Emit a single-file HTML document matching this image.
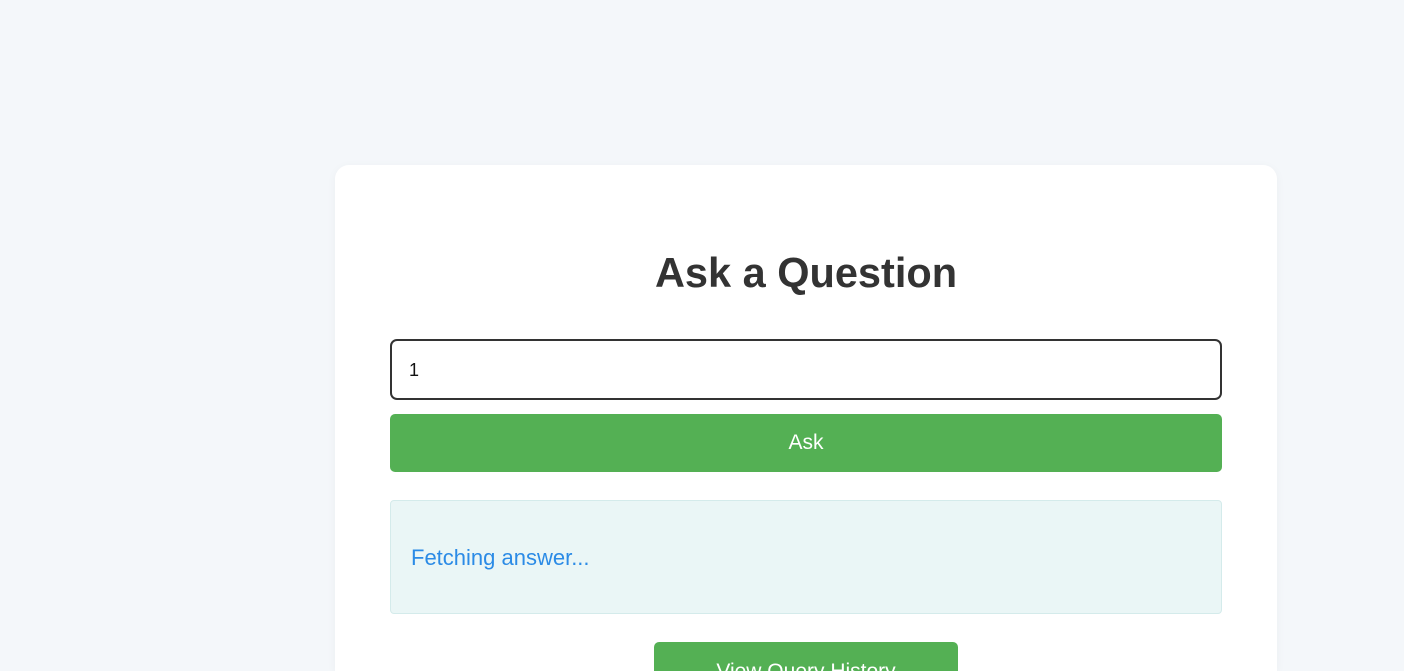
<!DOCTYPE html>
<html><head><style>
html,body{margin:0;width:1404px;height:671px;overflow:hidden}
body{background:#f4f7fa;font-family:"Liberation Sans",sans-serif;position:relative}
.card{position:absolute;left:335px;top:165px;width:942px;height:506px;background:#fff;border-radius:14px 14px 0 0;box-shadow:0 2px 10px rgba(0,0,0,0.04);overflow:hidden}
h1{position:absolute;left:335px;width:942px;top:250px;margin:0;text-align:center;font-size:41.5px;font-weight:bold;color:#333;line-height:46px}
.in{position:absolute;left:390px;top:339px;width:828px;height:57px;border:2px solid #333;border-radius:7px;background:#fff}
.in span{position:absolute;left:17px;top:19px;font-size:18px;color:#111}
.btn{position:absolute;left:390px;top:414px;width:832px;height:58px;background:#54b054;border-radius:5px;color:#fff;font-size:21px;text-align:center;line-height:58px}
.ans{position:absolute;left:390px;top:500px;width:830px;height:112px;background:#eaf6f6;border:1px solid #d4ebeb;border-radius:4px}
.ans span{position:absolute;left:20px;top:44px;font-size:22px;color:#2b8be6}
.vh{position:absolute;left:654px;top:642px;width:304px;height:29px;background:#54b054;border-radius:5px 5px 0 0;color:#fff;font-size:21px;text-align:center;line-height:52px;padding-top:4px;box-sizing:border-box;overflow:hidden}
</style></head><body>
<div class="card"></div>
<h1>Ask a Question</h1>
<div class="in"><span>1</span></div>
<div class="btn">Ask</div>
<div class="ans"><span>Fetching answer...</span></div>
<div class="vh">View Query History</div>
</body></html>
